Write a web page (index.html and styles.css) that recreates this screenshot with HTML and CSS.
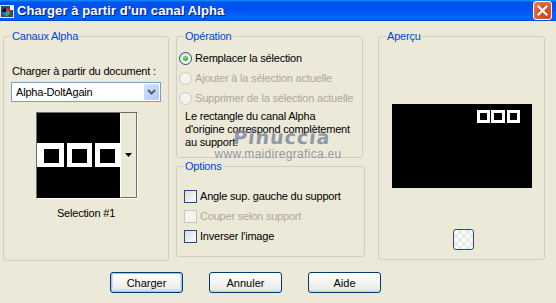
FILE: index.html
```html
<!DOCTYPE html>
<html lang="fr">
<head>
  <meta charset="UTF-8" />
  <title>Charger à partir d'un canal Alpha</title>
  <link rel="stylesheet" href="styles.css">
</head>
<body>
  <div class="titlebar">
    <svg class="app-icon" width="15" height="15" viewBox="0 0 15 15">
      <rect x="0.5" y="1.5" width="13" height="12" fill="#3b4a5c" stroke="#dfe6ee"/>
      <circle cx="6" cy="8" r="4" fill="#111"/>
      <path d="M6 4 A4 4 0 0 1 10 8 L6 8 Z" fill="#d8305a"/>
      <path d="M6 8 L10 8 A4 4 0 0 1 6 12 Z" fill="#3bb34a"/>
      <path d="M6 8 L6 12 A4 4 0 0 1 2 8 Z" fill="#2f6fe0"/>
      <rect x="10" y="2" width="4" height="4" fill="#f2f2f2"/>
    </svg>
    <span class="title">Charger à partir d'un canal Alpha</span>
    <div class="close-btn">
      <svg width="11" height="11" viewBox="0 0 11 11"><path d="M1.5 1.5 L9.5 9.5 M9.5 1.5 L1.5 9.5" stroke="#fff" stroke-width="2.2" stroke-linecap="square"/></svg>
    </div>
  </div>

  <div class="main">
    <fieldset class="group canaux">
      <legend>Canaux Alpha</legend>
      <div class="canaux-inner">
        <div class="doc-label">Charger à partir du document :</div>
        <div class="combo">
          <span class="combo-text">Alpha-DoltAgain</span>
          <span class="combo-arrow">
            <svg width="9" height="6" viewBox="0 0 9 6"><path d="M1 1 L4.5 4.5 L8 1" fill="none" stroke="#4d6185" stroke-width="2"/></svg>
          </span>
        </div>
        <div class="thumb">
          <svg class="thumb-img" width="83" height="85" viewBox="0 0 83 85">
            <rect width="83" height="85" fill="#000"/>
            <rect x="0" y="30" width="27" height="24" fill="#fff"/>
            <rect x="30" y="30" width="25" height="24" fill="#fff"/>
            <rect x="58" y="30" width="25" height="24" fill="#fff"/>
            <rect x="7" y="36" width="15" height="14" fill="#000"/>
            <rect x="35" y="36" width="15" height="14" fill="#000"/>
            <rect x="63" y="36" width="15" height="14" fill="#000"/>
          </svg>
          <div class="thumb-strip">
            <svg width="7" height="4" viewBox="0 0 7 4"><path d="M0 0 H7 L3.5 4 Z" fill="#000"/></svg>
          </div>
        </div>
        <div class="thumb-caption">Selection #1</div>
      </div>
    </fieldset>

    <div class="middle">
      <fieldset class="group operation">
        <legend>Opération</legend>
        <div class="operation-inner">
          <div class="radio-row"><span class="radio checked"></span>Remplacer la sélection</div>
          <div class="radio-row disabled"><span class="radio"></span>Ajouter à la sélection actuelle</div>
          <div class="radio-row disabled"><span class="radio"></span>Supprimer de la sélection actuelle</div>
          <p class="note">Le rectangle du canal Alpha<br>d'origine correspond complètement<br>au support.</p>
        </div>
      </fieldset>

      <fieldset class="group options">
        <legend>Options</legend>
        <div class="options-inner">
          <div class="check-row"><span class="checkbox"></span>Angle sup. gauche du support</div>
          <div class="check-row disabled"><span class="checkbox"></span>Couper selon support</div>
          <div class="check-row"><span class="checkbox"></span>Inverser l'image</div>
        </div>
      </fieldset>
    </div>

    <fieldset class="group apercu">
      <legend>Aperçu</legend>
      <div class="apercu-inner">
        <svg class="preview" width="140" height="84" viewBox="0 0 140 84">
          <rect width="140" height="84" fill="#000"/>
          <rect x="86.5" y="7.5" width="10" height="10" fill="none" stroke="#fff" stroke-width="3"/>
          <rect x="100.5" y="7.5" width="11" height="10" fill="none" stroke="#fff" stroke-width="3"/>
          <rect x="116.5" y="7.5" width="10" height="10" fill="none" stroke="#fff" stroke-width="3"/>
        </svg>
        <div class="bg-btn"></div>
      </div>
    </fieldset>
  </div>

  <div class="buttons">
    <button class="btn default">Charger</button>
    <button class="btn">Annuler</button>
    <button class="btn">Aide</button>
  </div>

  <div class="watermark">
    <div class="wm-name">Pinuccia</div>
    <div class="wm-url">www.maidiregrafica.eu</div>
  </div>
</body>
</html>
```

FILE: styles.css
```css
body {
  margin: 0;
  width: 556px;
  height: 303px;
  overflow: hidden;
  position: relative;
  background: #ece9d8;
  color: #000;
  font-family: "Liberation Sans", Arial, sans-serif;
  font-size: 11px;
  letter-spacing: -0.2px;
}

/* barre de titre XP */
.titlebar {
  height: 21px;
  display: flex;
  align-items: center;
  background: linear-gradient(to bottom, #0997ff 0%, #0053ee 10%, #0050ee 40%, #0066ff 85%, #005bff 93%, #003dd7 100%);
  color: #fff;
}
.app-icon {
  margin: 1px 2px 0 0;
}
.title {
  font-weight: bold;
  font-size: 13px;
  text-shadow: 1px 1px #0f1089;
  letter-spacing: 0.1px;
}
.close-btn {
  margin-left: auto;
  margin-right: 4px;
  width: 17px;
  height: 17px;
  border: 1px solid #fff;
  border-radius: 3px;
  background: radial-gradient(circle at 70% 70%, #cc4620 0%, #e0552e 50%, #f08a6a 100%);
  display: flex;
  align-items: center;
  justify-content: center;
}

.main {
  display: flex;
  padding: 9px 0 0 3px;
}

/* group boxes */
.group {
  margin: 0;
  padding: 0;
  border: 1px solid #d0d0bf;
  border-radius: 3px;
  box-sizing: border-box;
  min-width: 0;
}
.group legend {
  margin-left: 7px;
  padding: 0 1px;
  line-height: 13px;
  color: #0046d5;
}

.canaux {
  width: 166px;
  height: 231px;
}
.canaux-inner {
  padding: 22px 0 0 8px;
}
.doc-label {
  line-height: 13px;
}
.combo {
  margin: 4px 0 0 -1px;
  width: 150px;
  height: 20px;
  box-sizing: border-box;
  border: 1px solid #7f9db9;
  background: #fff;
  display: flex;
  align-items: center;
  padding: 1px;
}
.combo-text {
  padding-left: 3px;
  flex: 1;
}
.combo-arrow {
  width: 15px;
  height: 16px;
  background: linear-gradient(135deg, #d6e2fc, #b4c8f6);
  border-radius: 2px;
  display: flex;
  align-items: center;
  justify-content: center;
}
.thumb {
  margin: 10px 0 0 24px;
  width: 102px;
  height: 87px;
  box-sizing: border-box;
  border: 1px solid;
  border-color: #716f64 #fff #fff #716f64;
  display: flex;
}
.thumb-img {
  display: block;
}
.thumb-strip {
  flex: 1;
  border-left: 1px solid #fff;
  border-right: 1px solid #716f64;
  border-bottom: 1px solid #716f64;
  background: #ece9d8;
  display: flex;
  align-items: center;
  justify-content: center;
}
.thumb-caption {
  margin: 8px 0 0 -8px;
  width: 164px;
  text-align: center;
  line-height: 13px;
}

/* colonne du milieu */
.middle {
  margin-left: 7px;
  width: 189px;
  display: flex;
  flex-direction: column;
  gap: 2px;
}
.operation {
  width: 187px;
  height: 128px;
}
.operation-inner {
  padding: 5px 0 0 2px;
}
.radio-row, .check-row {
  height: 20px;
  display: flex;
  align-items: center;
  gap: 3px;
}
.disabled {
  color: #aca899;
}
.radio {
  width: 13px;
  height: 13px;
  box-sizing: border-box;
  border: 1px solid #1c5180;
  border-radius: 50%;
  background: linear-gradient(135deg, #dcdcd7, #fff);
  display: flex;
  align-items: center;
  justify-content: center;
}
.radio.checked::after {
  content: "";
  width: 5px;
  height: 5px;
  border-radius: 50%;
  background: radial-gradient(circle at 40% 40%, #6fe06b, #21a121);
}
.disabled .radio, .disabled .checkbox {
  border-color: #cac8bb;
  background: #f4f3ee;
}
.note {
  margin: 2px 0 0 6px;
  line-height: 13px;
}

.options {
  width: 189px;
  height: 97px;
}
.options-inner {
  padding: 13px 0 0 7px;
}
.checkbox {
  width: 13px;
  height: 13px;
  box-sizing: border-box;
  border: 1px solid #1c5180;
  background: linear-gradient(135deg, #dcdcd7, #fff);
}

/* aperçu */
.apercu {
  margin-left: 13px;
  width: 167px;
  height: 230px;
}
.apercu-inner {
  display: flex;
  flex-direction: column;
  align-items: center;
  padding-top: 61px;
}
.preview {
  display: block;
}
.bg-btn {
  margin: 41px 0 0 4px;
  width: 21px;
  height: 21px;
  box-sizing: border-box;
  border: 1px solid #1c5180;
  border-radius: 3px;
  background-color: #fafafa;
  background-image: conic-gradient(#e9e9e9 25%, transparent 0 50%, #e9e9e9 0 75%, transparent 0);
  background-size: 8px 8px;
}

/* boutons */
.buttons {
  display: flex;
  gap: 26px;
  padding: 11px 0 0 110px;
}
.btn {
  width: 73px;
  height: 21px;
  padding: 0;
  border: 1px solid #003c74;
  border-radius: 3px;
  background: linear-gradient(to bottom, #fff 0%, #f4f4f0 50%, #ecebe6 85%, #d6d0c5 100%);
  font-family: "Liberation Sans", Arial, sans-serif;
  font-size: 11px;
  color: #000;
}
.btn.default {
  box-shadow: inset 0 0 0 1px #a8c4ee, inset 0 -1px 0 2px #cfdff8;
}

/* filigrane */
.watermark {
  position: absolute;
  left: 210px;
  top: 126px;
  width: 136px;
  text-align: center;
  color: rgba(120, 130, 152, 0.8);
  pointer-events: none;
}
.wm-name {
  font-family: "DejaVu Sans", sans-serif;
  font-size: 19px;
  font-weight: bold;
  line-height: 22px;
  letter-spacing: 1px;
  transform: skewX(-6deg);
  padding-left: 8px;
}
.wm-url {
  font-size: 12px;
  line-height: 13px;
  letter-spacing: 0.3px;
}
```
